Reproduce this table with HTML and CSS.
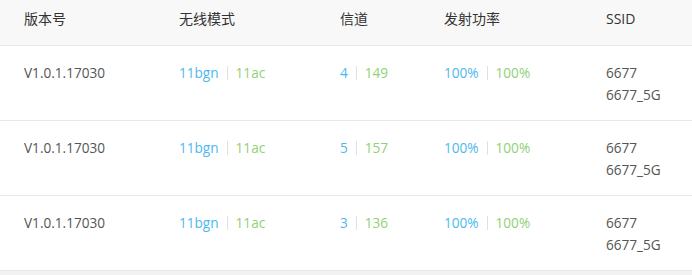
FILE: index.html
```html
<!DOCTYPE html>
<html lang="zh-CN">
<head>
<meta charset="utf-8">
<link rel="stylesheet" href="styles.css">
</head>
<body>
<div class="table">
  <div class="row head">
    <div>版本号</div><div>无线模式</div><div>信道</div><div>发射功率</div><div>SSID</div>
  </div>
  <div class="row">
    <div>V1.0.1.17030</div>
    <div><span class="b">11bgn</span><span class="sep"></span><span class="g">11ac</span></div>
    <div><span class="b">4</span><span class="sep"></span><span class="g">149</span></div>
    <div><span class="b">100%</span><span class="sep"></span><span class="g">100%</span></div>
    <div>6677<br>6677_5G</div>
  </div>
  <div class="row">
    <div>V1.0.1.17030</div>
    <div><span class="b">11bgn</span><span class="sep"></span><span class="g">11ac</span></div>
    <div><span class="b">5</span><span class="sep"></span><span class="g">157</span></div>
    <div><span class="b">100%</span><span class="sep"></span><span class="g">100%</span></div>
    <div>6677<br>6677_5G</div>
  </div>
  <div class="row">
    <div>V1.0.1.17030</div>
    <div><span class="b">11bgn</span><span class="sep"></span><span class="g">11ac</span></div>
    <div><span class="b">3</span><span class="sep"></span><span class="g">136</span></div>
    <div><span class="b">100%</span><span class="sep"></span><span class="g">100%</span></div>
    <div>6677<br>6677_5G</div>
  </div>
</div>
</body>
</html>
```
FILE: styles.css
```css
html, body { margin: 0; padding: 0; }
body {
  background: #f2f2f2;
  font-family: "Open Sans", "Noto Sans CJK SC", sans-serif;
  font-size: 13.6px;
  color: #555;
}
.table { background: #fff; }
.row {
  display: grid;
  grid-template-columns: 155px 161px 104px 162px 1fr;
  padding: 16px 0 14px 24px;
  line-height: 22px;
  min-height: 44px;
  border-bottom: 1px solid #e8e8e8;
}
.row.head {
  background: #f8f8f8;
  color: #333;
  font-size: 14px;
  padding: 8px 0 15px 24px;
  min-height: 22px;
}
.b { color: #4cb8f0; }
.g { color: #8fd175; }
.sep {
  display: inline-block;
  width: 1px;
  height: 14px;
  background: #e0e0e0;
  margin: 0 8px;
  vertical-align: -2px;
}
```
